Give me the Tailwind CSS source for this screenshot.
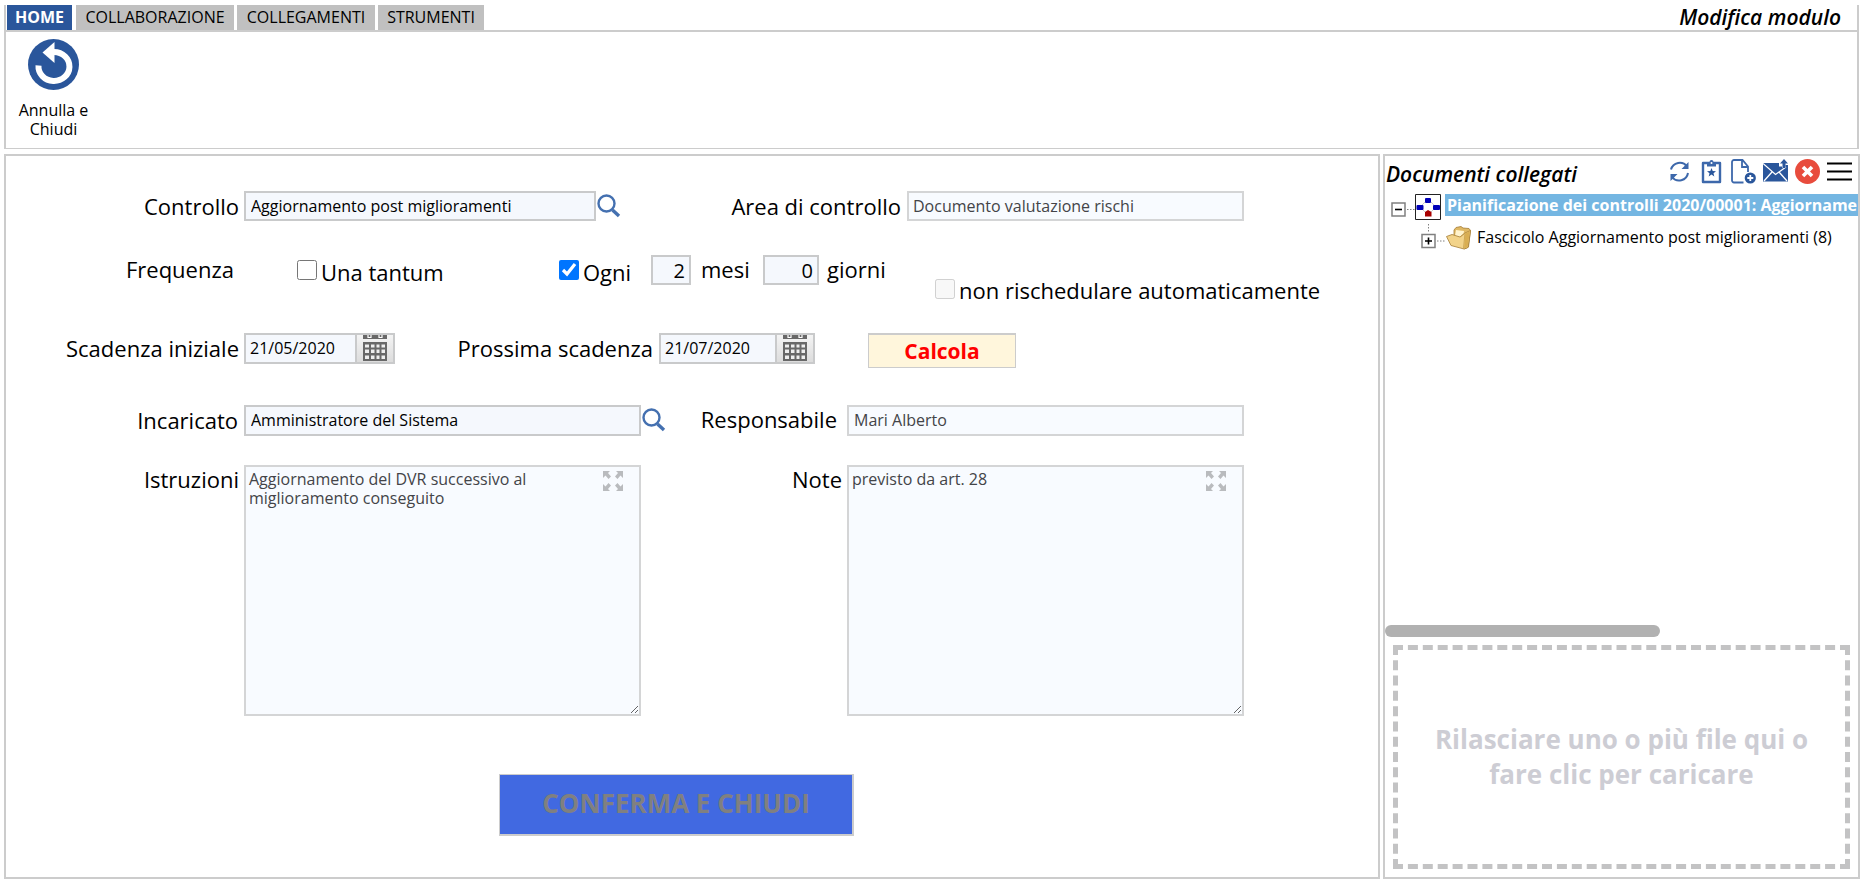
<!DOCTYPE html>
<html lang="it">
<head>
<meta charset="utf-8">
<title>Modifica modulo</title>
<script src="https://cdn.jsdelivr.net/npm/@tailwindcss/browser@4"></script>
</head>
<body class="flex min-h-screen flex-col bg-white px-1 pt-[5px] pb-[7px] font-['Open_Sans','Noto_Sans',sans-serif] text-black">

<svg class="hidden">
  <symbol id="lens" viewBox="0 0 24 24"><circle cx="9.500" cy="9.500" r="8" fill="none" stroke="#4470b0" stroke-width="2.400"/><path d="M15.500 16L22 22" stroke="#4470b0" stroke-width="3.400"/></symbol>
  <symbol id="calendar" viewBox="0 0 24 27">
    <path d="M0 0h24v4H0z" fill="#686868"/><path d="M5 0v2.500h3V0M16 0v2.500h3V0" fill="none" stroke="#fff" stroke-width="1.200"/>
    <path d="M0 7h24v19H0z" fill="#686868"/>
    <path d="M2 9.500h4v3H2zM8 9.500h3.500v3H8zM13.500 9.500h3v3h-3zM18.500 9.500H22v3h-3.500zM2 14.500h4v3.500H2zM8 14.500h3.500v3.500H8zM13.500 14.500h3v3.500h-3zM18.500 14.500H22v3.500h-3.500zM2 20.500h4V24H2zM8 20.500h3.500V24H8zM13.500 20.500h3V24h-3zM18.500 20.500H22V24h-3.500z" fill="#eee"/>
  </symbol>
  <symbol id="expand" viewBox="0 0 20 20"><g fill="#b9bbbe"><path d="M0 0h7L5 2l3 3.500L5.500 8 2.500 4.500 0 7z"/><path d="M20 0v7l-2.500-2.500-3 3.500L12 5.500 15 2l-2-2zM0 20v-7l2.500 2.500 3-3.500L8 14.500 5 18l2 2zM20 20h-7l2-2-3-3.500 2.500-2.500 3 3.500L20 13z"/></g></symbol>
</svg>

<header class="mr-[3px] border-x-2 border-b border-[#ccc]">
  <nav class="flex items-end border-b-2 border-[#ccc] pl-px text-base">
    <button class="mr-1 h-[25px] w-[65px] bg-[#2a569b] leading-[25px] font-bold text-white">HOME</button>
    <button class="mr-[3px] h-[25px] w-[158px] bg-[#c0c0c0] leading-[25px]">COLLABORAZIONE</button>
    <button class="mr-[3px] h-[25px] w-[138px] bg-[#c0c0c0] leading-[25px]">COLLEGAMENTI</button>
    <button class="h-[25px] w-[106px] bg-[#c0c0c0] leading-[25px]">STRUMENTI</button>
    <h1 class="ml-auto pr-4 text-[21px] leading-[25px] font-semibold italic">Modifica modulo</h1>
  </nav>
  <div class="h-[116px] pt-[7px] pl-2">
    <button class="flex w-[79px] flex-col items-center gap-[11px] text-base leading-[19px]">
      <svg class="size-[51px]" viewBox="0 0 51 51"><circle cx="25.500" cy="25.500" r="25.500" fill="#2a569b"/><path d="M10.500 26.500A15.500 14.500 0 1 0 26 13" fill="none" stroke="#fff" stroke-width="6"/><path d="M14.500 13.500L26.500 3v21z" fill="#fff"/></svg>
      <span>Annulla e<br>Chiudi</span>
    </button>
  </div>
</header>

<div class="mt-[5px] mr-[2px] grid grow grid-cols-[1376fr_477fr] gap-[3px]">
  <main class="min-w-0 border-2 border-[#ccc]">
    <form class="pt-[35px] text-[22px] leading-[30px]">
      <div class="flex items-center">
        <label for="controllo" class="w-[238px] pr-[5px] text-right">Controllo</label>
        <input id="controllo" value="Aggiornamento post miglioramenti" class="h-[30px] w-[352px] border-2 border-[#c9cacb] bg-[#f5f8fd] px-[5px] text-base">
        <button type="button" aria-label="Cerca controllo" class="ml-px"><svg class="size-6"><use href="#lens"/></svg></button>
        <label for="area" class="w-[286px] pr-[6px] text-right">Area di controllo</label>
        <input id="area" disabled value="Documento valutazione rischi" class="h-[30px] w-[337px] border-2 border-[#d4d5d6] bg-[#f8fbff] px-1 text-base text-[#434448]">
      </div>

      <div class="mt-[34px] flex h-[30px] items-center">
        <span class="w-[238px] pr-[10px] pb-[2px] text-right">Frequenza</span>
        <label class="ml-[53px] flex w-[262px] items-center gap-1 pt-1"><input type="checkbox" class="mb-1 size-5">Una tantum</label>
        <label class="flex w-[92px] items-center gap-1 pt-1"><input type="checkbox" checked class="mb-1 size-5">Ogni</label>
        <input id="mesi" value="2" class="h-[30px] w-10 border-2 border-[#c9cacb] bg-[#f5f8fd] px-1 text-right text-xl">
        <label for="mesi" class="w-[72px] pb-[2px] pl-[10px]">mesi</label>
        <input id="giorni" value="0" class="h-[30px] w-14 border-2 border-[#c9cacb] bg-[#f5f8fd] px-1 text-right text-xl">
        <label for="giorni" class="w-[116px] pb-[2px] pl-2">giorni</label>
        <label class="flex items-center gap-1 pt-10 whitespace-nowrap"><input type="checkbox" disabled class="mb-[2px] size-5">non rischedulare automaticamente</label>
      </div>

      <div class="mt-12 flex items-start">
        <label for="iniziale" class="w-[238px] pr-[5px] text-right">Scadenza iniziale</label>
        <div class="flex h-[31px] w-[151px] border-2 border-[#c9cacb] bg-[#f5f8fd]">
          <input id="iniziale" value="21/05/2020" class="w-[109px] bg-transparent pb-px pl-1 text-base">
          <button type="button" aria-label="Apri calendario" class="flex grow justify-center border-l-2 border-[#c9cacb] bg-linear-to-b from-[#f4f4f4] to-[#dcdcdc]"><svg class="h-[27px] w-6"><use href="#calendar"/></svg></button>
        </div>
        <label for="prossima" class="w-[264px] pr-[6px] text-right">Prossima scadenza</label>
        <div class="flex h-[31px] w-[156px] border-2 border-[#c9cacb] bg-[#f5f8fd]">
          <input id="prossima" value="21/07/2020" class="w-[114px] bg-transparent pb-px pl-1 text-base">
          <button type="button" aria-label="Apri calendario" class="flex grow justify-center border-l-2 border-[#c9cacb] bg-linear-to-b from-[#f4f4f4] to-[#dcdcdc]"><svg class="h-[27px] w-6"><use href="#calendar"/></svg></button>
        </div>
        <button type="button" class="ml-[53px] h-[35px] w-[148px] border border-t-2 border-[#ccc] bg-[#fff6dc] text-[21px] leading-[30px] font-bold text-[#f00]">Calcola</button>
      </div>

      <div class="mt-[36px] flex h-[32px] items-center">
        <label for="incaricato" class="w-[238px] pr-[6px] text-right">Incaricato</label>
        <input id="incaricato" value="Amministratore del Sistema" class="h-[31px] w-[397px] border-2 border-[#c9cacb] bg-[#f5f8fd] px-[5px] text-base">
        <button type="button" aria-label="Cerca incaricato" class="ml-px"><svg class="size-6"><use href="#lens"/></svg></button>
        <label for="responsabile" class="w-[181px] pr-[10px] pb-[2px] text-right">Responsabile</label>
        <input id="responsabile" disabled value="Mari Alberto" class="h-[31px] w-[397px] border-2 border-[#d4d5d6] bg-[#f8fbff] px-[5px] text-base text-[#434448]">
      </div>

      <div class="mt-[29px] flex items-start">
        <label for="istruzioni" class="w-[238px] pr-[5px] text-right leading-[28px]">Istruzioni</label>
        <div class="relative">
          <textarea id="istruzioni" disabled class="block h-[251px] w-[397px] resize border-2 border-[#d4d5d6] bg-[#f8fbff] py-[3px] pr-20 pl-[3px] text-base leading-[19px] text-[#434448]">Aggiornamento del DVR successivo al miglioramento conseguito</textarea>
          <button type="button" aria-label="Espandi istruzioni" class="absolute top-[6px] right-[18px]"><svg class="size-5"><use href="#expand"/></svg></button>
        </div>
        <label for="note" class="w-[206px] pr-[5px] text-right leading-[28px]">Note</label>
        <div class="relative">
          <textarea id="note" disabled class="block h-[251px] w-[397px] resize border-2 border-[#d4d5d6] bg-[#f8fbff] py-[3px] pr-20 pl-[3px] text-base leading-[19px] text-[#434448]">previsto da art. 28</textarea>
          <button type="button" aria-label="Espandi note" class="absolute top-[6px] right-[18px]"><svg class="size-5"><use href="#expand"/></svg></button>
        </div>
      </div>

      <button type="submit" disabled class="mt-[58px] ml-[493px] h-[62px] w-[355px] border border-r-2 border-b-2 border-[#ccc] bg-[#4169e1] pb-1 text-[26px] font-bold text-[#808080]">CONFERMA E CHIUDI</button>
    </form>
  </main>

  <aside class="flex min-w-0 flex-col border-2 border-[#ccc]">
    <div class="flex h-8 items-start justify-between pr-[6px] pl-px">
      <h2 class="pt-1 text-[21px] leading-[28px] font-semibold italic">Documenti collegati</h2>
      <div class="flex items-center gap-[7px] pt-[3px]">
        <button aria-label="Aggiorna"><svg class="size-[25px]" viewBox="0 0 25 25" fill="none" stroke="#3d68ab" stroke-width="2"><path d="M4 10.500A9 9 0 0 1 20 7.500M21 14a9 9 0 0 1-16 4"/><path d="M21.500 3v7h-7zM3.500 22v-7h7z" fill="#3d68ab" stroke="none"/></svg></button>
        <button aria-label="Segnalibri"><svg class="size-[25px]" viewBox="0 0 25 25"><path d="M4 4h17v19H4z" fill="none" stroke="#3d68ab" stroke-width="2.400" stroke-linejoin="round"/><path d="M8 3h2.500a2 2 0 0 1 4 0H17v4.500H8z" fill="#3d68ab"/><circle cx="12.500" cy="4" r="1" fill="#fff"/><path d="M12.500 9l1.200 3 3.300.2-2.500 2 .8 3.200-2.800-1.800-2.800 1.800.8-3.200-2.500-2 3.300-.2z" fill="#2a569b"/></svg></button>
        <button aria-label="Nuovo documento"><svg class="size-[25px]" viewBox="0 0 25 25"><path d="M12.500 23.500H3a2 2 0 0 1-2-2V3a2 2 0 0 1 2-2h8.500L17 7.500V13M11 1v7h6" fill="none" stroke="#3d68ab" stroke-width="1.800"/><circle cx="19.300" cy="19" r="5.600" fill="#2a569b"/><path d="M19.300 16v6M16.300 19h6" stroke="#fff" stroke-width="1.800"/></svg></button>
        <button aria-label="Invia"><svg class="size-[25px]" viewBox="0 0 25 25"><path d="M0 4h16v3.500h3V9h3.500V6H25v16.500H0z" fill="#2a569b"/><path d="M0 4.500l12.500 11L23 8M1 22l8-9M24 22l-8-9" fill="none" stroke="#fff" stroke-width="1.300"/><path d="M21 0l4 4.500h-2.500V9h-3V4.500H17z" fill="#2a569b"/></svg></button>
        <button aria-label="Elimina"><svg class="size-[25px]" viewBox="0 0 25 25"><circle cx="12.500" cy="12.500" r="12.500" fill="#e84c3d"/><path d="M8 8l9 9M17 8l-9 9" stroke="#fff" stroke-width="3.600"/></svg></button>
        <button aria-label="Menu"><svg class="size-[25px]" viewBox="0 0 25 25"><path d="M0 4.500h25M0 12.500h25M0 20.500h25" stroke="#000" stroke-width="2.200"/></svg></button>
      </div>
    </div>

    <ul class="h-[433px] overflow-hidden pt-[6px] text-base leading-[22px] whitespace-nowrap">
      <li class="flex h-[26px] items-start pl-[6px]">
        <button aria-label="Comprimi" class="mt-2"><svg class="block h-[15px] w-6" viewBox="0 0 24 15"><path d="M1 1h13v13H1z" fill="#fff" stroke="#808080" stroke-width="1.500"/><path d="M4 7.500h7" stroke="#000" stroke-width="1.600"/><path d="M16 7.500h8" stroke="#808080" stroke-dasharray="1.500 1.500"/></svg></button>
        <svg class="size-[26px] shrink-0" viewBox="0 0 26 26"><path d="M.5.500h25v25H.5z" fill="#fff" stroke="#222"/><path d="M7 11l3-3M19 11l-3-3M7 15l3 3M19 15l-3 3" stroke="#ccc"/><rect x="10" y="4" width="6" height="5" rx="1" fill="#0000b8"/><rect x="1.500" y="11" width="7" height="5" rx="1" fill="#0000b8"/><rect x="18" y="11" width="7" height="5" rx="1" fill="#0000b8"/><path d="M10 18l3-2 3.500 2v4.500H10z" fill="#a80000"/></svg>
        <a href="#" class="ml-1 min-w-0 grow overflow-hidden bg-[#74b6e2] pl-[2px] font-bold text-white">Pianificazione dei controlli 2020/00001: Aggiornamento</a>
      </li>
      <li class="flex h-9 items-center pl-9">
        <button aria-label="Espandi"><svg class="block h-9 w-[25px]" viewBox="0 0 25 36"><path d="M7.500 4v9" stroke="#808080" stroke-dasharray="1.500 1.500"/><path d="M1 14.500h13v13H1z" fill="#fff" stroke="#808080" stroke-width="1.500"/><path d="M4 21h7M7.500 17.500v7" stroke="#000" stroke-width="1.600"/><path d="M16 21h9" stroke="#808080" stroke-dasharray="1.500 1.500"/></svg></button>
        <svg class="h-6 w-[26px] shrink-0" viewBox="0 0 26 24"><path d="M8 11V4l2-2.500L15 .500 17 2l6 .500 1.500 2-2 16.500-4 2z" fill="#e0b965" stroke="#a57c35" stroke-width=".8"/><path d="M10 4l8 1-1 7-8-2z" fill="#fff3cd"/><path d="M.5 10.500L6 8.500l8 2.500 5-4 5.500-2.500-2.500 17-4 1.500L5 19.500z" fill="#f2d38a" stroke="#a57c35" stroke-width=".8"/><path d="M14 11l5-4-1.500 15.500" fill="none" stroke="#c29a4a" stroke-width=".8"/><path d="M19 7.500l5-2.500-2.300 16-3.700 1.500z" fill="#d9ae52"/></svg>
        <a href="#" class="ml-[5px] pb-[2px]">Fascicolo Aggiornamento post miglioramenti (8)</a>
      </li>
    </ul>
    <div class="mt-auto h-3 w-[58.2%] rounded-md bg-[#b1b1b1]"></div>
    <button class="mx-2 mt-2 mb-2 flex h-[224px] items-center justify-center border-[5px] border-dashed border-[#c3c3c4] px-6 text-[26px] leading-[35px] font-bold text-[#cdcdd4]">Rilasciare uno o più file qui o fare clic per caricare</button>
  </aside>
</div>
</body>
</html>
